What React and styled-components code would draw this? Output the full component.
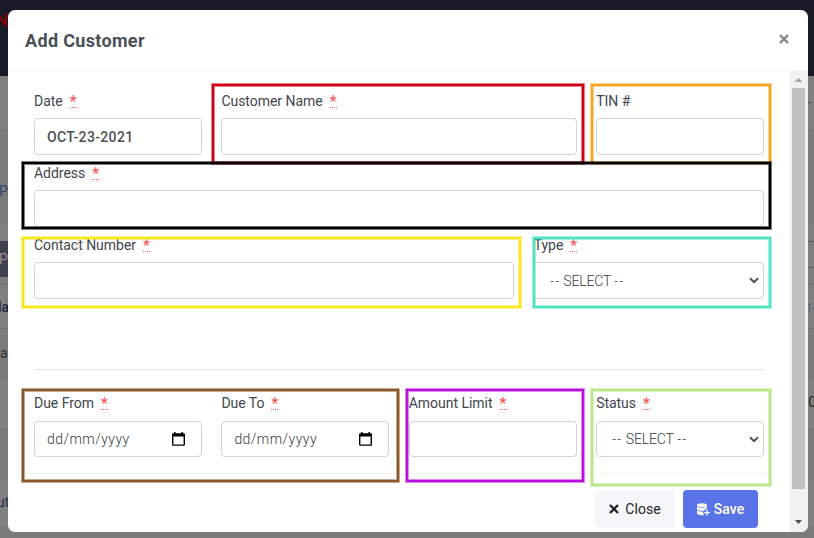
import React from "react";
import styled, { createGlobalStyle } from "styled-components";

const Global = createGlobalStyle`
  *{box-sizing:border-box}
  body{margin:0;background:#7b7d7c;overflow:hidden;font-family:Roboto,sans-serif;color:#495057}
`;

const Stage = styled.div`position:relative;width:814px;height:538px;overflow:hidden;`;
const Page = styled.div`position:absolute;inset:0;display:flex;flex-direction:column;`;
const Band = styled.div`
  height:${p => p.$h}px;flex:none;background:${p => p.$bg};
  border-bottom:${p => p.$line ? `1px solid ${p.$line}` : "0"};
  display:flex;align-items:center;justify-content:space-between;overflow:hidden;white-space:nowrap;
`;
const Bit = styled.span`
  font-size:${p => p.$size || 14}px;font-weight:${p => p.$weight || 400};color:${p => p.$color};
  margin-left:${p => p.$left || 0}px;margin-right:${p => p.$right || 0}px;
  transform:translateY(${p => p.$dy || 0}px);
`;
const EdgeIcon = styled.svg`width:6px;height:12px;`;
const TableHead = styled.div`width:400px;height:36px;background:#3f4050;display:flex;align-items:center;`;
const SearchEdge = styled.div`
  width:200px;height:27px;align-self:flex-start;border:solid #5f5f5f;border-width:1px 0;
`;

const Dialog = styled.section`
  position:absolute;left:8px;top:10px;width:800px;height:522px;background:#fff;
  border-radius:7px;overflow:hidden;display:flex;flex-direction:column;
`;
const Header = styled.header`
  height:61px;flex:none;border-bottom:1px solid #f3f3f4;padding:0 18px 0 17px;
  display:flex;align-items:center;justify-content:space-between;
`;
const Title = styled.h1`margin:2px 0 0;font-size:18px;line-height:24px;font-weight:700;letter-spacing:.33px;color:#495057;`;
const CloseX = styled.svg`width:10px;height:10px;margin-top:-3px;margin-right:1px;`;
const Main = styled.div`flex:1;min-height:0;display:flex;`;
const Body = styled.div`flex:1;padding:21px 16px 0;display:flex;flex-direction:column;`;
const Grid = styled.div`
  display:grid;grid-template-columns:repeat(12,minmax(0,1fr));column-gap:19.5px;padding:0 10px;
  height:${p => p.$h}px;flex:none;align-content:start;
`;
const Field = styled.label`
  grid-column:span ${p => p.$span};display:flex;flex-direction:column;
`;
const Label = styled.span`
  height:${p => p.$h || 26}px;line-height:18px;font-size:14px;font-weight:400;letter-spacing:-.03px;
  color:#3f464d;display:flex;gap:7px;white-space:pre;
`;
const Star = styled.abbr`
  height:16px;color:#ff5050;font-size:16px;line-height:20px;letter-spacing:0;
  border-bottom:1px dotted #ff5050;width:7px;text-decoration:none;
`;
const Control = styled.div`
  height:${p => p.$h || 37}px;border:1px solid #ced4da;border-radius:4px;background:#fff;
  display:flex;align-items:center;justify-content:space-between;
  padding:0 ${p => p.$pr || 12}px 0 ${p => p.$pl || 12}px;font-size:14px;
  font-weight:${p => p.$weight || 400};letter-spacing:${p => p.$ls || 0}px;white-space:pre;
`;
const Dash = styled.span`letter-spacing:1.2px;display:inline-block;transform:scaleX(.95);`;
const Choice = styled.span`font-weight:300;color:#343b42;letter-spacing:-.15px;`;
const DateHint = styled.span`font-weight:300;color:#343b42;`;
const Rule = styled.div`height:1px;background:#e2e2e3;margin:0 10px 24px;flex:none;`;
const Footer = styled.footer`
  border-top:1px solid #f3f3f4;padding:16px 16px 0 0;display:flex;justify-content:flex-end;gap:8px;
`;
const Button = styled.button`
  height:38px;width:${p => p.$w}px;border:0;border-radius:4px;padding:0;
  background:${p => p.$primary ? "#5a73e8" : "#f5f6f8"};color:${p => p.$primary ? "#fff" : "#212529"};
  font:${p => p.$primary ? 500 : 400} 14px Roboto,sans-serif;letter-spacing:${p => p.$primary ? 0 : 0.1}px;
  display:flex;align-items:center;justify-content:center;gap:${p => p.$primary ? 4 : 6}px;
`;
const Scrollbar = styled.div`
  width:18px;background:#f1f1f1;display:flex;flex-direction:column;align-items:center;padding-right:2px;
`;
const ArrowBox = styled.svg`width:17px;height:17px;flex:none;margin-top:${p => p.$end ? "auto" : 0};`;
const Thumb = styled.div`width:13px;height:401px;background:#c1c1c1;`;
const Marker = styled.div`
  position:absolute;pointer-events:none;
  left:${p => p.$x - 1}px;top:${p => p.$y - 1}px;
  width:${p => p.$r - p.$x + 2}px;height:${p => p.$b - p.$y + 2}px;
  border:2px solid rgb(${p => p.$c});
  box-shadow:0 0 0 1px rgba(${p => p.$c},.5),inset 0 0 0 1px rgba(${p => p.$c},.5);
`;

const Chevron = () => (
  <svg width="10" height="7" viewBox="0 0 10 7"><path d="M1 1.2 5 5.2 9 1.2" fill="none" stroke="#495057" strokeWidth="2" /></svg>
);
const Calendar = () => (
  <svg width="13" height="14" viewBox="0 0 13 14">
    <path d="M2 0h1.5v1.2h6V0H11v1.2h.8q1.2 0 1.2 1.2v10.2q0 1.2-1.2 1.2H1.2Q0 13.8 0 12.6V2.4Q0 1.2 1.2 1.2H2zM1.4 4.6v7.8h10.2V4.6z" fill="#000" fillRule="evenodd" />
  </svg>
);
const Cross = () => (
  <svg width="10" height="10" viewBox="0 0 10 10"><path d="m1 1 8 8M9 1 1 9" stroke="#212529" strokeWidth="2.4" /></svg>
);
const DatabasePlus = () => (
  <svg width="13" height="13" viewBox="0 0 13 13">
    <ellipse cx="5" cy="2.2" rx="5" ry="1.9" fill="#fff" />
    <path d="M0 3.7q5 2.2 10 0v1.8q-1.8.2-3 2.2-4 .4-7-1zM0 7.6q3 1.3 6.3 1v1.7q.1 1 1 1.7Q1.5 12.7 0 10.8z" fill="#fff" />
    <path d="M10 6.8v5.6M7.2 9.6h5.6" stroke="#fff" strokeWidth="1.3" />
  </svg>
);

function FormField({ span, text, required, labelH, children, ...control }) {
  return (
    <Field $span={span}>
      <Label $h={labelH}>{text}{required && <Star>*</Star>}</Label>
      <Control {...control}>{children}</Control>
    </Field>
  );
}
function SelectText() {
  return <Choice><Dash>--</Dash> SELECT <Dash>--</Dash></Choice>;
}

const bands = [
  { h: 76, bg: "#181b27", left: ["N", "#8b0000", 18, 500, -5, -19] },
  { h: 55, bg: "#808080", line: "#747474", icon: ["M0 5 1.5 6.5 3 5", "#3c3c3c"] },
  { h: 91, bg: "#7b7b7b", line: "#777", left: ["P", "#2b4569", 14, 400, -1, 15] },
  { h: 19, bg: "#7f7f7f" },
  { h: 36, bg: "#7f7f7f", head: ["P", "#a08c94", 14, 400, -1, 0] },
  { h: 8, bg: "#7c7c7c", line: "#747474" },
  { h: 44, bg: "#808080", line: "#747474", left: ["la", "#1c2733", 14, 500, -2, 0], icon: ["M1.5 11V2M0 4 1.5 2 3 4M4 6l2 3", "#56697c"] },
  { h: 50, bg: "#7a7c7b", line: "#747474", left: ["a", "#2a3038", 14, 400, 0, -1] },
  { h: 50, bg: "#808080", line: "#747474", right: ["0", "#20242a", 14, 400, -2, -2] },
  { h: 50, bg: "#7a7c7b", line: "#747474" },
  { h: 49, bg: "#808080", line: "#747474", left: ["ut", "#1c3150", 14, 400, -3, -1] },
  { h: 10, bg: "#7a7c7b" },
];
const markers = [
  [213, 85, 583, 163, "208,2,27"],
  [592, 85, 770, 163, "245,166,35"],
  [23, 163, 770, 228, "0,0,0"],
  [23, 238, 520, 307, "248,231,28"],
  [534, 238, 770, 307, "80,227,194"],
  [23, 390, 398, 481, "139,87,42"],
  [407, 390, 583, 481, "189,16,224"],
  [592, 390, 770, 485, "184,233,134"],
];

function Fragment({ data, side }) {
  const [text, color, size, weight, x, dy] = data;
  return <Bit $color={color} $size={size} $weight={weight} $left={side === "l" ? x : 0} $right={side === "r" ? x : 0} $dy={dy}>{text}</Bit>;
}

export default function App() {
  return (
    <Stage>
      <Global />
      <Page>
        {bands.map((b, i) => (
          <Band key={i} $h={b.h} $bg={b.bg} $line={b.line}>
            {b.head ? <><TableHead><Fragment data={b.head} side="l" /></TableHead><SearchEdge /></>
              : b.left ? <Fragment data={b.left} side="l" /> : <i />}
            {b.right && <Fragment data={b.right} side="r" />}
            {b.icon && <EdgeIcon viewBox="0 0 6 12"><path d={b.icon[0]} stroke={b.icon[1]} fill="none" /></EdgeIcon>}
          </Band>
        ))}
      </Page>
      <Dialog>
        <Header>
          <Title>Add Customer</Title>
          <CloseX viewBox="0 0 10 10"><path d="m1 1 8 8M9 1 1 9" stroke="#808080" strokeWidth="2.2" /></CloseX>
        </Header>
        <Main>
          <Body>
            <Grid $h={72}>
              <FormField span={3} text="Date" required $weight={500} $ls={0.35}>OCT-23-2021</FormField>
              <FormField span={6} text="Customer Name" required />
              <FormField span={3} text="TIN #" />
            </Grid>
            <Grid $h={72}><FormField span={12} text="Address" required /></Grid>
            <Grid $h={133}>
              <FormField span={8} text="Contact Number" required />
              <FormField span={4} text="Type" required $pl={15} $pr={4}><SelectText /><Chevron /></FormField>
            </Grid>
            <Rule />
            <Grid $h={79}>
              <FormField span={3} text="Due From" required labelH={27} $h={36} $pr={16} $ls={0.45}><DateHint>dd/mm/yyyy</DateHint><Calendar /></FormField>
              <FormField span={3} text="Due To" required labelH={27} $h={36} $pr={16} $ls={0.45}><DateHint>dd/mm/yyyy</DateHint><Calendar /></FormField>
              <FormField span={3} text="Amount Limit" required labelH={27} $h={36} />
              <FormField span={3} text="Status" required labelH={27} $h={36} $pl={15} $pr={4}><SelectText /><Chevron /></FormField>
            </Grid>
            <Footer>
              <Button $w={80}><Cross />Close</Button>
              <Button $w={75} $primary><DatabasePlus />Save</Button>
            </Footer>
          </Body>
          <Scrollbar>
            <ArrowBox viewBox="0 0 17 17"><path d="M4.5 11 8.5 7l4 4z" fill="#a3a3a3" /></ArrowBox>
            <Thumb />
            <ArrowBox viewBox="0 0 17 17" $end><path d="M5 5h7l-3.5 4z" fill="#505050" /></ArrowBox>
          </Scrollbar>
        </Main>
      </Dialog>
      {markers.map(([x, y, r, b, c]) => <Marker key={c} $x={x} $y={y} $r={r} $b={b} $c={c} />)}
    </Stage>
  );
}
